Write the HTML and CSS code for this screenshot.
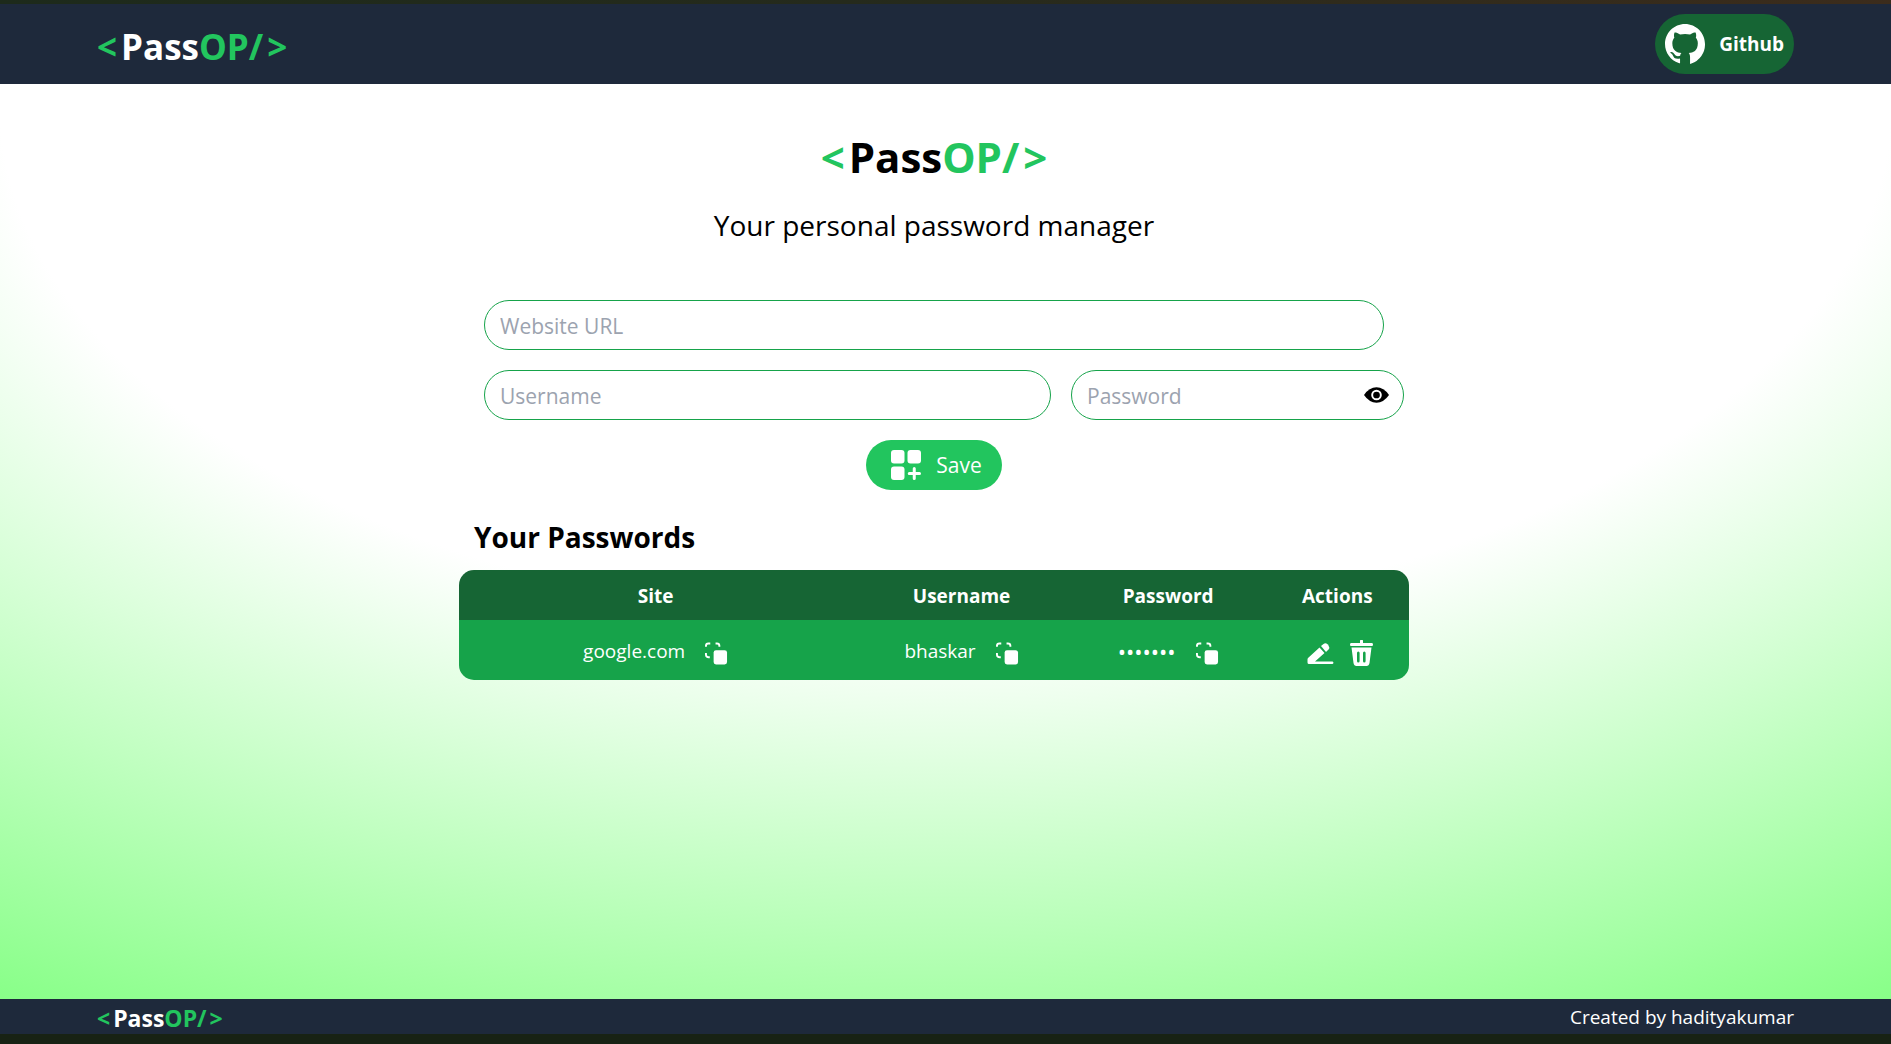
FILE: index.html
```html
<!DOCTYPE html>
<html lang="en">
<head>
<meta charset="utf-8">
<meta name="viewport" content="width=device-width, initial-scale=1">
<title>PassOP</title>
<link rel="stylesheet" href="styles.css">
</head>
<body>
<svg class="sprite" aria-hidden="true">
  <symbol id="copy" viewBox="0 0 24 24">
    <g fill="none" stroke="currentColor" stroke-width="2">
      <path d="M1 5.500V4.500Q1 2 3.500 2H5.500M11 2H12.500Q15 2 15 4.500V5.500M1 12V13.500Q1 16.500 4 16.500H5"/>
    </g>
    <rect x="9" y="9" width="14" height="15" rx="2.500" fill="currentColor"/>
  </symbol>
</svg>

<header class="topbar">
  <a class="logo" href="#"><span class="accent open">&lt;</span>Pass<span class="accent">OP/</span><span class="accent close">&gt;</span></a>
  <button class="github" type="button">
    <svg class="github-mark" viewBox="0 0 16 16" aria-hidden="true"><path fill="currentColor" d="M8 0C3.580 0 0 3.580 0 8c0 3.540 2.290 6.530 5.470 7.590.1.020.4.100.55.100V13.820c-2.010.37-2.530-.49-2.690-.94-.09-.23-.48-.94-.82-1.130-.28-.15-.68-.52-.01-.53.63-.01 1.080.58 1.230.82.72 1.210 1.870.87 2.330.66.07-.52.28-.87.51-1.070-1.780-.2-3.640-.89-3.640-3.950 0-.87.31-1.590.82-2.150-.08-.2-.36-1.020.08-2.120 0 0 .67-.21 2.200.82.64-.18 1.320-.27 2-.27s1.360.09 2 .27c1.530-1.040 2.200-.82 2.200-.82.44 1.100.16 1.920.08 2.120.51.56.82 1.270.82 2.150 0 3.070-1.870 3.750-3.650 3.950.29.25.54.73.54 1.480V15.970c0 0 .3-.1.540-.2A8.010 8.010 0 0 0 16 8c0-4.420-3.580-8-8-8z"/></svg>
    <span>Github</span>
  </button>
</header>

<main class="page">
  <div class="content">
    <h1 class="title"><span class="accent open">&lt;</span>Pass<span class="accent">OP/</span><span class="accent close">&gt;</span></h1>
    <p class="tagline">Your personal password manager</p>

    <form class="form">
      <input class="field" type="text" placeholder="Website URL" aria-label="Website URL">
      <div class="form-row">
        <input class="field" type="text" placeholder="Username" aria-label="Username">
        <div class="password">
          <input class="field" type="password" placeholder="Password" aria-label="Password">
          <button class="eye" type="button" aria-label="Show password">
            <svg viewBox="0 0 26 16" aria-hidden="true"><path d="M0 8Q5.500 0 13 0T26 8Q20.500 16 13 16T0 8Z"/><circle cx="13" cy="8" r="4.500" fill="none" stroke="#fff" stroke-width="2"/></svg>
          </button>
        </div>
      </div>
      <button class="save" type="button">
        <svg viewBox="0 0 30 30" fill="currentColor" aria-hidden="true"><rect width="13.500" height="13.500" rx="3"/><rect x="16.500" width="13.500" height="13.500" rx="3"/><rect y="16.500" width="13.500" height="13.500" rx="3"/><path d="M23.250 18.500V28.500M18.250 23.500H28.500" stroke="currentColor" stroke-width="3" stroke-linecap="round"/></svg>
        <span>Save</span>
      </button>
    </form>

    <h2 class="subtitle">Your Passwords</h2>
    <table class="vault">
      <colgroup><col class="col-site"><col class="col-user"><col class="col-pass"><col class="col-actions"></colgroup>
      <thead>
        <tr><th scope="col">Site</th><th scope="col">Username</th><th scope="col">Password</th><th scope="col">Actions</th></tr>
      </thead>
      <tbody>
        <tr>
          <td><div class="cell"><a href="#">google.com</a><button class="icon" type="button" aria-label="Copy site"><svg><use href="#copy"/></svg></button></div></td>
          <td><div class="cell"><span>bhaskar</span><button class="icon" type="button" aria-label="Copy username"><svg><use href="#copy"/></svg></button></div></td>
          <td><div class="cell"><span class="dots">•••••••</span><button class="icon" type="button" aria-label="Copy password"><svg><use href="#copy"/></svg></button></div></td>
          <td><div class="cell cell-actions">
            <button class="icon icon-wide" type="button" aria-label="Edit"><svg viewBox="0 0 27 26" fill="currentColor"><path d="M1 18 12.500 7.500 17.500 13 8 21.500H25.500A1.300 1.300 0 0 1 25.500 24H2Q.5 24 .5 22.500V19.500Q.5 18.500 1 18Z"/><path d="M14 6 16.500 4Q18.500 2.500 20.500 4.200L21.500 5.500Q23 7.500 21.500 9.500L19 12Z"/></svg></button>
            <button class="icon icon-wide" type="button" aria-label="Delete"><svg viewBox="0 0 27 26" fill="currentColor"><path d="M12 3V1a1.500 1.500 0 0 1 3 0V3H24Q25 3 25 4.500T24 6H3Q2 6 2 4.500T3 3Z"/><path fill-rule="evenodd" d="M3.500 7.500H23.500L21.500 23Q21 26 18.500 26H8.500Q6 26 5.500 23ZM9 13V21Q9 22.500 10.300 22.500T11.600 21V13Q11.600 11.500 10.300 11.500T9 13ZM15 13V21Q15 22.500 16.300 22.500T17.600 21V13Q17.600 11.500 16.300 11.500T15 13Z"/></svg></button>
          </div></td>
        </tr>
      </tbody>
    </table>
  </div>
</main>

<footer class="footer">
  <div class="logo logo-small"><span class="accent open">&lt;</span>Pass<span class="accent">OP/</span><span class="accent close">&gt;</span></div>
  <div>Created by hadityakumar</div>
</footer>
</body>
</html>
```
FILE: styles.css
```css
* { box-sizing: border-box; }

body {
  margin: 0;
  min-height: 100vh;
  display: flex;
  flex-direction: column;
  background: radial-gradient(125% 125% at 50% 10%, #fff 40%, #4aff4a 100%);
  font-family: "Open Sans", "Noto Sans", sans-serif;
  font-size: 19px;
  line-height: 30px;
  color: #000;
}

h1, h2, p { margin: 0; }
a { color: inherit; text-decoration: none; }
button { font: inherit; color: inherit; border: 0; padding: 0; background: none; cursor: pointer; }
svg { display: block; }
.sprite { display: none; }
.accent { color: #22c55e; }
.open { margin-right: 4px; }
.close { margin-left: 4px; }

.topbar, .footer {
  display: flex;
  align-items: center;
  justify-content: space-between;
  padding: 0 97px;
  background: #1e293b;
  color: #fff;
}

.topbar {
  height: 84px;
  border-top: 4px solid #212a1c;
  border-image: linear-gradient(90deg, #1d2a1b, #262a1c 50%, #3c2c1c) 4;
}

.logo { padding-top: 6px; font-size: 35px; line-height: 50px; font-weight: 700; }
.logo-small { padding-top: 2px; font-size: 23px; line-height: 32px; }
.logo-small .open { margin-right: 3px; }
.logo-small .close { margin-left: 3px; }

.github {
  display: flex;
  align-items: center;
  gap: 14px;
  height: 60px;
  padding: 0 10px;
  border-radius: 30px;
  background: #166534;
  font-weight: 700;
}
.github-mark { width: 40px; height: 40px; }

.page {
  flex: 1;
  padding: 43px 23px 40px 0;
}

.content { max-width: 950px; margin: 0 auto; }

.title { font-size: 42px; line-height: 60px; text-align: center; }
.tagline { margin-top: 18px; font-size: 28px; line-height: 40px; text-align: center; }

.form {
  display: flex;
  flex-direction: column;
  gap: 20px;
  margin-top: 55px;
  padding: 0 25px;
  font-size: 21px;
}
.form-row {
  display: grid;
  grid-template-columns: 567fr 333fr;
  gap: 20px;
  margin-right: -20px;
}

.field {
  width: 100%;
  min-width: 0;
  height: 50px;
  padding: 2px 15px 0;
  border: 1px solid #16a34a;
  border-radius: 25px;
  background: #fff;
  font: inherit;
}
.field::placeholder { color: #9ca3af; opacity: 1; }
.password { position: relative; }
.eye { position: absolute; right: 15px; top: 17px; }
.eye svg { width: 25px; height: 16px; }

.save {
  align-self: center;
  display: flex;
  align-items: center;
  gap: 15px;
  height: 50px;
  padding: 0 20px 0 25px;
  border-radius: 25px;
  background: #22c55e;
  color: #fff;
}
.save svg { width: 30px; height: 30px; }

.subtitle { margin-top: 27px; padding-left: 15px; font-size: 28px; line-height: 40px; }

.vault {
  width: 100%;
  margin-top: 13px;
  table-layout: fixed;
  border-collapse: collapse;
  border-radius: 15px;
  overflow: hidden;
  color: #fff;
}
.vault thead { background: #166534; }
.vault tbody { background: #16a34a; }
.vault th { height: 50px; padding: 2px 0 0; }
.vault td { height: 60px; padding: 2px 0 0; }
.col-site { width: 41.4%; }
.col-user { width: 23%; }
.col-pass { width: 20.5%; }
.col-actions { width: 15.1%; }

.cell { display: flex; align-items: center; justify-content: center; gap: 20px; }
.cell-actions { gap: 14px; padding-left: 8px; }
.icon svg { width: 23px; height: 24px; margin-top: 4px; }
.icon-wide svg { width: 27px; height: 26px; }
.dots { font-size: 22px; }

.footer {
  height: 45px;
  border-bottom: 10px solid #182214;
}
```
